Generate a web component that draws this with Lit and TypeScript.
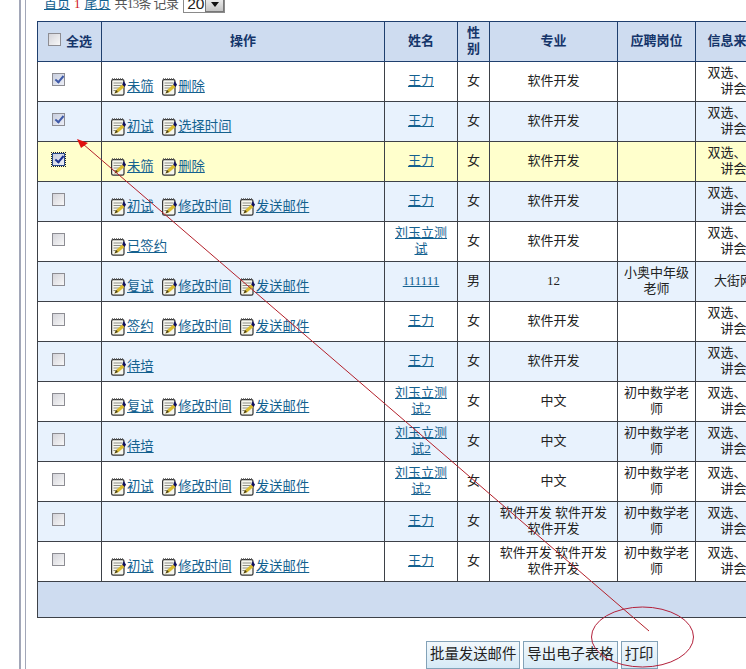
import { LitElement, html, css, svg } from "lit";
import { customElement } from "lit/decorators.js";

type Row = {
  checked?: boolean; active?: boolean; ops: string[]; name: string; gender: string;
  major: string; job: string; src: string;
};

const base = { gender: "女", major: "软件开发", job: "", src: "双选、宣讲会" };
const teacher = "初中数学老师";
const triple = "软件开发 软件开发 软件开发";
const rows: Row[] = [
  { ...base, checked: true, ops: ["未筛", "删除"], name: "王力" },
  { ...base, checked: true, ops: ["初试", "选择时间"], name: "王力" },
  { ...base, checked: true, active: true, ops: ["未筛", "删除"], name: "王力" },
  { ...base, ops: ["初试", "修改时间", "发送邮件"], name: "王力" },
  { ...base, ops: ["已签约"], name: "刘玉立测试" },
  { ops: ["复试", "修改时间", "发送邮件"], name: "111111", gender: "男", major: "12", job: "小奥中年级老师", src: "大街网" },
  { ...base, ops: ["签约", "修改时间", "发送邮件"], name: "王力" },
  { ...base, ops: ["待培"], name: "王力" },
  { ...base, major: "中文", job: teacher, ops: ["复试", "修改时间", "发送邮件"], name: "刘玉立测试2" },
  { ...base, major: "中文", job: teacher, ops: ["待培"], name: "刘玉立测试2" },
  { ...base, major: "中文", job: teacher, ops: ["初试", "修改时间", "发送邮件"], name: "刘玉立测试2" },
  { ...base, major: triple, job: teacher, ops: [], name: "王力" },
  { ...base, major: triple, job: teacher, ops: ["初试", "修改时间", "发送邮件"], name: "王力" },
];

const noteIcon = svg`<svg class="note" width="15" height="18" viewBox="0 0 15 18" aria-hidden="true">
  <rect x="0.6" y="1.6" width="12.4" height="15.6" rx="1.6" fill="#f6f6ee" stroke="#333" stroke-width="1.2"/>
  <path d="M1 1h12" stroke="#555" stroke-width="1.6" stroke-dasharray="1 1"/>
  <path d="M2.5 5h9M2.5 7.5h9M2.5 10h7M2.5 12.5h4.5" stroke="#8f8f88"/>
  <path d="M3.5 15.5l1.6-3.4 6.4-5.8 2.2 2.4-6.4 5.6z" fill="#d9bb30"/>
  <path d="M3.5 15.5l1.6-3.4 1.9 2z" fill="#4a3f14"/>
  <path d="M11.3 6.8L12.6 3 15 6.5 13.7 9z" fill="#10105e"/>
</svg>`;

@customElement("app-root")
export class AppRoot extends LitElement {
  static styles = css`
    :host {
      display: flex; width: 746px; height: 669px; overflow: hidden; position: relative;
      background: #fff; color: #222;
      font: 13px/16px "Liberation Serif", "Noto Sans CJK SC", serif;
    }
    .rail { flex: none; width: 4px; margin-left: 19px; border-left: 2px solid #a2a7b8; border-right: 1px solid #a2a7b8; }
    main { flex: none; width: 720px; padding-left: 11px; }
    .pager { height: 21px; display: flex; align-items: flex-end; padding-left: 7px; color: #555; }
    .pager-in { display: flex; align-items: center; gap: 4px; margin-bottom: 8px; height: 18px; }
    .pager .cur { color: #d01818; }
    .count { letter-spacing: -0.65px; }
    .select { display: flex; align-items: center; width: 42px; height: 18px; box-sizing: border-box; border: 1px solid #8a8a8a; background: #fff; color: #222; font: 15.5px "Liberation Sans", sans-serif; padding-left: 3px; margin-left: 1px; }
    .arrowbtn { margin-left: auto; width: 19px; height: 16px; box-sizing: border-box; background: linear-gradient(#f4f4f4, #c4c4c4); border: 1px solid #777; display: flex; align-items: center; justify-content: center; }
    .arrowbtn i { border: 4px solid transparent; border-top: 5px solid #111; border-bottom: 0; }
    table { border-collapse: collapse; table-layout: fixed; width: 734px; }
    th, td { padding: 0 5px 2px; text-align: center; vertical-align: middle; font-weight: normal; border: 1px solid #3d4148; }
    thead th { height: 40px; box-sizing: border-box; background: #cedcf0; color: #15356a; font-weight: bold; border-color: #1f3f6e; }
    thead th.wrap { padding: 0 8px 2px; }
    thead th.all { padding-bottom: 0; }
    .allbox { display: flex; align-items: center; gap: 5px; padding-left: 5px; }
    tbody tr { height: 40px; }
    tbody tr:nth-child(even) td { background: #e8f2fd; }
    tbody tr.active td { background: #ffffcc; }
    td.check { vertical-align: top; padding: 11px 0 0 14px; }
    td.ops { text-align: left; padding: 16px 0 0 9px; vertical-align: top; font-size: 13.33px; }
    td.src { padding: 0 8px 2px; }
    .op-list { display: flex; gap: 8.5px; height: 18px; }
    .op { display: flex; align-items: center; gap: 1px; }
    a { color: #14618f; text-decoration: underline; }
    .note { flex: none; }
    .box { appearance: none; display: block; margin: 0; width: 13px; height: 13px; box-sizing: border-box; border: 1px solid #8d8d93; background: linear-gradient(135deg, #d4d4da, #f8f8f8); position: relative; }
    .allbox .box { flex: none; margin-top: -4px; }
    .box:checked { background: linear-gradient(135deg, #c8cede, #eceef6); }
    .box:checked::after { content: ""; position: absolute; left: 4px; top: 0px; width: 3px; height: 7px; border: solid #3f5aa8; border-width: 0 2px 2px 0; transform: rotate(40deg); }
    .box.focus { outline: 1px dotted #222; outline-offset: 0; border-color: #2a4a8a; }
    .box.focus::after { border-color: #1a2f90 !important; }
    tfoot td { height: 36px; box-sizing: border-box; background: #cedcf0; }
    .actions { display: flex; gap: 3px; padding: 23px 0 0 389px; }
    button { font: 14.4px/20px "Noto Sans CJK SC", sans-serif; height: 28px; padding: 0 3px 5px; box-sizing: border-box; color: #222; border: 1px solid #83a2b8; background: linear-gradient(#f2f8fc, #d6eaf6); white-space: nowrap; }
    .overlay { position: absolute; left: 0; top: 0; pointer-events: none; }
  `;

  render() {
    return html`
      <div class="rail"></div>
      <main>
        <div class="pager">
          <div class="pager-in">
            <a href="#">首页</a><span class="cur">1</span><a href="#">尾页</a><span class="count">共13条 记录</span>
            <div class="select">20<span class="arrowbtn"><i></i></span></div>
          </div>
        </div>
        <table>
          <colgroup>
            <col style="width:64px"/><col style="width:283px"/><col style="width:73px"/><col style="width:32px"/>
            <col style="width:128px"/><col style="width:78px"/><col style="width:76px"/>
          </colgroup>
          <thead>
            <tr>
              <th class="all"><label class="allbox"><input class="box" type="checkbox"/>全选</label></th>
              <th>操作</th><th>姓名</th><th class="wrap">性别</th><th>专业</th><th>应聘岗位</th><th class="src">信息来源</th>
            </tr>
          </thead>
          <tbody>
            ${rows.map((r) => html`
              <tr class=${r.active ? "active" : ""}>
                <td class="check"><input class="box ${r.active ? "focus" : ""}" type="checkbox" .checked=${!!r.checked}/></td>
                <td class="ops"><div class="op-list">${r.ops.map((o) => html`<span class="op">${noteIcon}<a href="#">${o}</a></span>`)}</div></td>
                <td><a href="#">${r.name}</a></td>
                <td>${r.gender}</td>
                <td>${r.major}</td>
                <td>${r.job}</td>
                <td class="src">${r.src}</td>
              </tr>`)}
          </tbody>
          <tfoot><tr><td colspan="7"></td></tr></tfoot>
        </table>
        <div class="actions">
          <button>批量发送邮件</button><button>导出电子表格</button><button>打印</button>
        </div>
      </main>
      <svg class="overlay" width="746" height="669" viewBox="0 0 746 669" aria-hidden="true">
        <path d="M649 631L83 144" stroke="#b3202a" stroke-width="1" fill="none"/>
        <path d="M77 139L88 143L81 148z" fill="#e01010"/>
        <ellipse cx="642.5" cy="637" rx="51" ry="30" fill="none" stroke="#b3203a" stroke-width="1"/>
      </svg>
    `;
  }
}
